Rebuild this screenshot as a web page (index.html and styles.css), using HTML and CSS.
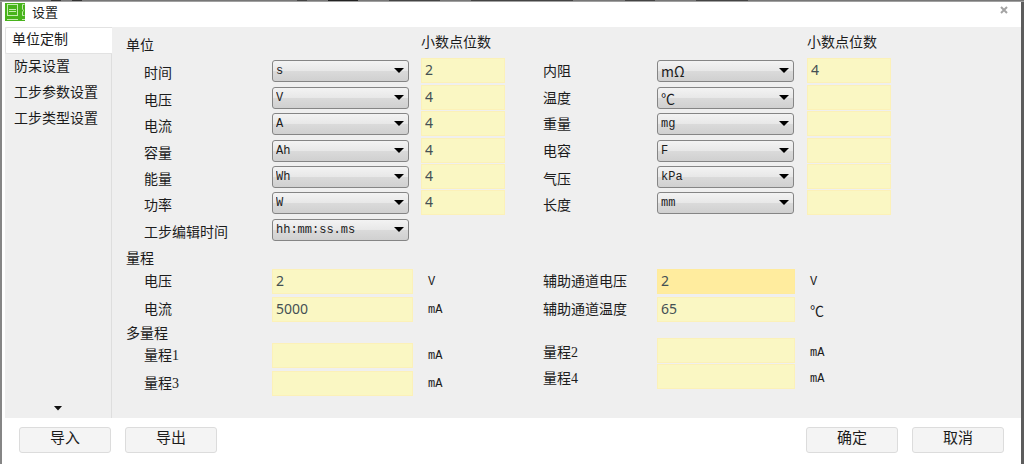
FILE: index.html
```html
<!DOCTYPE html>
<html lang="zh-CN">
<head>
<meta charset="utf-8">
<title>设置</title>
<link rel="stylesheet" href="styles.css">
</head>
<body>
<div class="backdrop"></div>
<div class="dialog">
  <header class="titlebar">
    <svg class="logo" width="20" height="18" viewBox="0 0 20 18" aria-hidden="true">
      <rect width="20" height="18" fill="#48b31c"/>
      <g fill="none" stroke="#c5edb0" stroke-width="1">
        <rect x="2.5" y="1.500" width="10" height="11"/>
        <path d="M4 6.500H11M4 8.500H11M19.500 1.500H17.500V6L18.500 7.500L17.500 9V12.500H19.500M2 16.500H13M17 16.500H20"/>
      </g>
    </svg>
    <h1 class="title">设置</h1>
    <button class="close" type="button" aria-label="关闭">
      <svg width="8" height="8" viewBox="0 0 8 8"><path d="M1 1L7 7M7 1L1 7" stroke="#a3a3a3" stroke-width="2"/></svg>
    </button>
  </header>
  <div class="content">
    <nav class="tabs">
      <button class="tab active" type="button">单位定制</button>
      <button class="tab" type="button">防呆设置</button>
      <button class="tab" type="button">工步参数设置</button>
      <button class="tab" type="button">工步类型设置</button>
      <button class="scroll" type="button" aria-label="向下滚动"><span class="arrow"></span></button>
    </nav>
    <main class="form">
      <div class="panel left">
        <div class="row head"><h2>单位</h2><span></span><span class="caption">小数点位数</span></div>
        <div class="units">
          <div class="row"><label for="time">时间</label><span class="combo"><select id="time"><option>s</option></select></span><input class="digits" aria-label="时间小数点位数" value="2"></div>
          <div class="row"><label for="volt">电压</label><span class="combo"><select id="volt"><option>V</option></select></span><input class="digits" aria-label="电压小数点位数" value="4"></div>
          <div class="row"><label for="curr">电流</label><span class="combo"><select id="curr"><option>A</option></select></span><input class="digits" aria-label="电流小数点位数" value="4"></div>
          <div class="row"><label for="capa">容量</label><span class="combo"><select id="capa"><option>Ah</option></select></span><input class="digits" aria-label="容量小数点位数" value="4"></div>
          <div class="row"><label for="ener">能量</label><span class="combo"><select id="ener"><option>Wh</option></select></span><input class="digits" aria-label="能量小数点位数" value="4"></div>
          <div class="row"><label for="powr">功率</label><span class="combo"><select id="powr"><option>W</option></select></span><input class="digits" aria-label="功率小数点位数" value="4"></div>
          <div class="row"><label for="edit">工步编辑时间</label><span class="combo"><select id="edit"><option>hh:mm:ss.ms</option></select></span></div>
        </div>
        <h2 class="range-title">量程</h2>
        <div class="ranges">
          <div class="row"><label for="rv">电压</label><input class="value" id="rv" value="2"><span class="unit">V</span></div>
          <div class="row"><label for="rc">电流</label><input class="value" id="rc" value="5000"><span class="unit">mA</span></div>
        </div>
        <h2 class="multi-title">多量程</h2>
        <div class="ranges">
          <div class="row"><label for="r1">量程1</label><input class="value" id="r1"><span class="unit">mA</span></div>
          <div class="row"><label for="r3">量程3</label><input class="value" id="r3"><span class="unit">mA</span></div>
        </div>
      </div>
      <div class="panel right">
        <div class="row head"><span></span><span></span><span class="caption">小数点位数</span></div>
        <div class="units">
          <div class="row"><label for="resi">内阻</label><span class="combo"><select id="resi" class="symbol"><option>mΩ</option></select></span><input class="digits" aria-label="内阻小数点位数" value="4"></div>
          <div class="row"><label for="temp">温度</label><span class="combo"><select id="temp" class="symbol"><option>℃</option></select></span><input class="digits" aria-label="温度小数点位数"></div>
          <div class="row"><label for="mass">重量</label><span class="combo"><select id="mass"><option>mg</option></select></span><input class="digits" aria-label="重量小数点位数"></div>
          <div class="row"><label for="capc">电容</label><span class="combo"><select id="capc"><option>F</option></select></span><input class="digits" aria-label="电容小数点位数"></div>
          <div class="row low"><label for="pres">气压</label><span class="combo"><select id="pres"><option>kPa</option></select></span><input class="digits" aria-label="气压小数点位数"></div>
          <div class="row low"><label for="leng">长度</label><span class="combo"><select id="leng"><option>mm</option></select></span><input class="digits" aria-label="长度小数点位数"></div>
        </div>
        <div class="ranges aux">
          <div class="row"><label for="av">辅助通道电压</label><input class="value current" id="av" value="2"><span class="unit">V</span></div>
          <div class="row"><label for="at">辅助通道温度</label><input class="value" id="at" value="65"><span class="unit symbol">℃</span></div>
        </div>
        <div class="ranges multi">
          <div class="row"><label for="r2">量程2</label><input class="value" id="r2"><span class="unit">mA</span></div>
          <div class="row"><label for="r4">量程4</label><input class="value" id="r4"><span class="unit">mA</span></div>
        </div>
      </div>
    </main>
  </div>
  <footer class="footer">
    <button class="btn" type="button">导入</button>
    <button class="btn" type="button">导出</button>
    <button class="btn ok" type="button">确定</button>
    <button class="btn" type="button">取消</button>
  </footer>
</div>
</body>
</html>
```

FILE: styles.css
```css
* {
  box-sizing: border-box;
}

body {
  margin: 0;
  min-height: 100vh;
  display: flex;
  flex-direction: column;
  padding-bottom: 1px;
  background: #fff;
  color: #1c1c1c;
  font: 14px/20px "Liberation Serif", "Noto Sans CJK SC", serif;
}

button,
input,
select {
  margin: 0;
  font: inherit;
  color: inherit;
}

h1,
h2 {
  margin: 0;
  font-size: 14px;
  font-weight: 400;
  line-height: 20px;
}

/* Sliver of the dimmed window behind the dialog */
.backdrop {
  height: 2px;
  border-bottom: 1px solid #a0a0a0;
  background: linear-gradient(90deg,
    #777 5%, #333 5% 6%, #777 6% 7%, #333 7% 8%, #777 8% 29%,
    #444 29% 30%, #777 30% 32%, #222 32% 35%, #777 35% 38%,
    #444 38% 43%, #777 43% 46%, #444 46% 56%, #777 56% 61%,
    #444 61% 64%, #777 64% 68%, #444 68% 73%, #777 73%);
}

.dialog {
  flex: 1;
  display: flex;
  flex-direction: column;
  border-style: solid;
  border-width: 0 3px 0 2px;
  border-color: #5c5c5c #5c5c5c #5c5c5c #858585;
  background: #fff;
}

.titlebar {
  display: flex;
  align-items: flex-start;
  height: 25px;
  padding: 1px 12px 0 3px;
}

.title {
  flex: 1;
  padding-left: 7px;
  font-size: 13px;
  line-height: 20px;
}

.close {
  padding: 3px 1px;
  border: 0;
  background: none;
  line-height: 0;
}

.content {
  flex: 1;
  display: flex;
  margin-left: 3px;
  background: #efefef;
}

.tabs {
  display: flex;
  flex-direction: column;
  width: 107px;
  border-right: 1px solid #dedede;
}

.tab {
  height: 26px;
  padding: 0 0 1px 9px;
  border: 0;
  background: none;
  text-align: left;
  white-space: nowrap;
}

.tab.active {
  height: 27px;
  margin-right: -1px;
  padding: 0 0 2px 6px;
  border: 1px solid #e2e2e2;
  border-right: 0;
  border-radius: 2px 0 0 2px;
  background: #fff;
}

.scroll {
  margin-top: auto;
  height: 20px;
  padding: 0;
  border: 0;
  background: none;
}

.arrow {
  display: block;
  width: 9px;
  height: 5px;
  margin: 0 auto;
  background: #111;
  clip-path: polygon(0 0, 100% 0, 50% 100%);
}

.form {
  flex: 1;
  display: flex;
  padding-left: 14px;
}

.panel.left {
  flex: 417;
}

.panel.right {
  flex: 478;
}

.row {
  display: grid;
  grid-template-columns: 128fr 149fr 122fr;
  align-items: start;
}

.left .row {
  padding-left: 18px;
}

.right .row {
  grid-template-columns: 114fr 150fr 214fr;
}

.head {
  height: 31px;
  padding-top: 6px;
}

.head h2 {
  margin-left: -18px;
  padding-top: 3px;
}

.units {
  display: grid;
  grid-template-rows: 27px 26px 27px 26px 26px 27px;
  grid-auto-rows: 27px;
}

.units label {
  padding-top: 4px;
}

.left .units label,
.units .low label {
  padding-top: 6px;
}

.combo {
  position: relative;
  width: 137px;
  margin-top: 2px;
}

.combo::after {
  content: "";
  position: absolute;
  top: 8px;
  right: 5px;
  width: 10px;
  height: 5px;
  background: #000;
  clip-path: polygon(0 0, 100% 0, 50% 100%);
  pointer-events: none;
}

.combo select {
  display: block;
  appearance: none;
  width: 100%;
  height: 22px;
  padding: 0 20px 0 3px;
  border: 1px solid #858585;
  border-radius: 3px;
  background: linear-gradient(#f3f3f3, #e8e8e8 48%, #dadada 52%, #d0d0d0);
  font-family: "Liberation Mono", monospace;
  font-size: 12px;
}

.combo .symbol,
.unit.symbol {
  font-family: "Noto Sans CJK SC", sans-serif;
  font-size: 14px;
}

.digits,
.value {
  width: 84px;
  height: 25px;
  padding: 0 3px 2px;
  border: 1px solid #fcf1b8;
  border-radius: 0;
  background: #faf7c3;
  color: #445054;
  font-family: "Noto Sans", "Open Sans", sans-serif;
}

.value {
  width: 141px;
}

.right .value {
  width: 138px;
}

.value.current {
  border-color: #ffeb9c;
  background: #ffec9e;
}

.range-title {
  height: 25px;
  padding-top: 5px;
}

.multi-title {
  height: 19px;
}

.ranges {
  display: grid;
  grid-auto-rows: 27px;
  row-gap: 1px;
}

.ranges label {
  padding-top: 3px;
}

.unit {
  padding: 3px 0 0 7px;
  font-family: "Liberation Mono", monospace;
  font-size: 12px;
}

.right .unit {
  padding-left: 3px;
}

.aux {
  margin-top: 52px;
}

.multi {
  grid-auto-rows: 26px;
  row-gap: 0;
  margin-top: 14px;
}

.multi label,
.multi .unit {
  padding-top: 5px;
}

.footer {
  display: flex;
  gap: 14px;
  height: 46px;
  padding: 9px 17px 0;
}

.btn {
  width: 92px;
  height: 26px;
  padding: 0 0 5px;
  border: 1px solid #dcdcdc;
  border-radius: 3px;
  background: #f4f4f4;
  font-size: 15px;
  line-height: 18px;
}

.ok {
  margin-left: auto;
}
```
